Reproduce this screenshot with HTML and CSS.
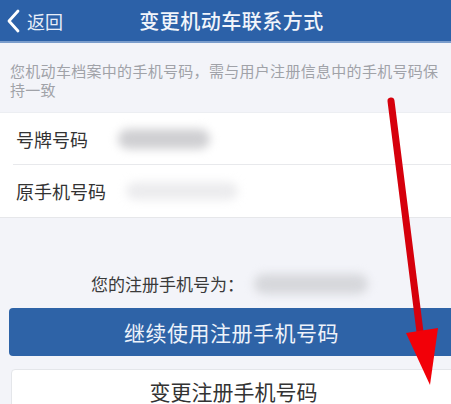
FILE: index.html
```html
<!DOCTYPE html>
<html lang="zh">
<head>
<meta charset="utf-8">
<title>变更机动车联系方式</title>
<link rel="stylesheet" href="styles.css">
</head>
<body>
<div class="page">
  <header class="topbar">
    <div class="back">
      <svg class="chev" width="14" height="24" viewBox="0 0 14 24"><path d="M12 2 L3 12 L12 22" fill="none" stroke="#fff" stroke-width="2.8" stroke-linecap="round" stroke-linejoin="round"/></svg>
      <span>返回</span>
    </div>
    <h1 class="title">变更机动车联系方式</h1>
  </header>
  <p class="desc">您机动车档案中的手机号码，需与用户注册信息中的手机号码保持一致</p>
  <section class="list">
    <div class="row"><span class="label">号牌号码</span><span class="blur b1"></span></div>
    <div class="row"><span class="label">原手机号码</span><span class="blur b2"></span></div>
  </section>
  <div class="reg"><span>您的注册手机号为：</span><span class="blur b3"></span></div>
  <button class="btn primary">继续使用注册手机号码</button>
  <button class="btn plain">变更注册手机号码</button>
  <svg class="arrow" width="451" height="404" viewBox="0 0 451 404">
    <line x1="391" y1="101" x2="421" y2="340" stroke="#d6000c" stroke-width="7" stroke-linecap="round"/>
    <polygon points="406,333 438,328 430,385" fill="#f20008"/>
  </svg>
</div>
</body>
</html>
```
FILE: styles.css
```css
html, body {
  margin: 0;
  padding: 0;
  width: 451px;
  height: 404px;
  overflow: hidden;
  background: #f3f4f9;
}
.page {
  position: relative;
  width: 463px;
  height: 404px;
  font-family: "Noto Sans CJK SC", "Noto Sans", sans-serif;
  background: #f3f4f9;
}
.topbar {
  position: relative;
  height: 41px;
  background: #2c61a8;
  border-bottom: 2px solid #7b9dcc;
  display: flex;
  align-items: center;
  justify-content: center;
}
.back {
  position: absolute;
  left: 6px;
  top: 0;
  height: 41px;
  display: flex;
  align-items: center;
  gap: 7px;
  color: #e8eef8;
  font-size: 18px;
}
.title {
  margin: 0;
  font-size: 20px;
  font-weight: 500;
  color: #f2f5fb;
  letter-spacing: 0.5px;
}
.desc {
  margin: 0;
  padding: 18px 10px 13px 10px;
  font-size: 15px;
  line-height: 19px;
  color: #a0a2a8;
  letter-spacing: 0.3px;
}
.list {
  background: #fff;
  border-top: 1px solid #eceef2;
  border-bottom: 1px solid #e6e7ea;
}
.row {
  display: flex;
  align-items: center;
  height: 51px;
  padding-left: 16px;
}
.row + .row {
  border-top: 1px solid #e8e9ec;
  margin-left: 13px;
  padding-left: 3px;
  height: 52px;
}
.label {
  font-size: 18px;
  color: #333;
  width: 102px;
}
.blur {
  display: inline-block;
  border-radius: 10px;
  filter: blur(5px);
}
.b1 { width: 92px; height: 20px; background: #cfcfd2; }
.b2 { width: 112px; height: 18px; background: #ececee; margin-left: 8px; }
.b3 { width: 114px; height: 20px; background: #d6d7db; }
.reg {
  margin-top: 54px;
  display: flex;
  justify-content: center;
  align-items: center;
  gap: 10px;
  font-size: 17px;
  line-height: 24px;
  color: #3a3a3a;
  padding-right: 4px;
}
.btn {
  display: block;
  margin-left: 9px;
  width: 445px;
  font-family: "Noto Sans CJK SC", "Noto Sans", sans-serif;
  font-size: 21px;
  border-radius: 4px;
  cursor: pointer;
}
.primary {
  margin-top: 12px;
  height: 48px;
  background: #2e63a7;
  color: #eef3fb;
  border: none;
  letter-spacing: 0.5px;
}
.plain {
  margin-top: 13px;
  margin-left: 11px;
  height: 48px;
  background: #fff;
  color: #333;
  border: 1px solid #e4e6ea;
  padding-bottom: 6px;
}
.arrow {
  position: absolute;
  left: 0;
  top: 0;
  pointer-events: none;
}
```
